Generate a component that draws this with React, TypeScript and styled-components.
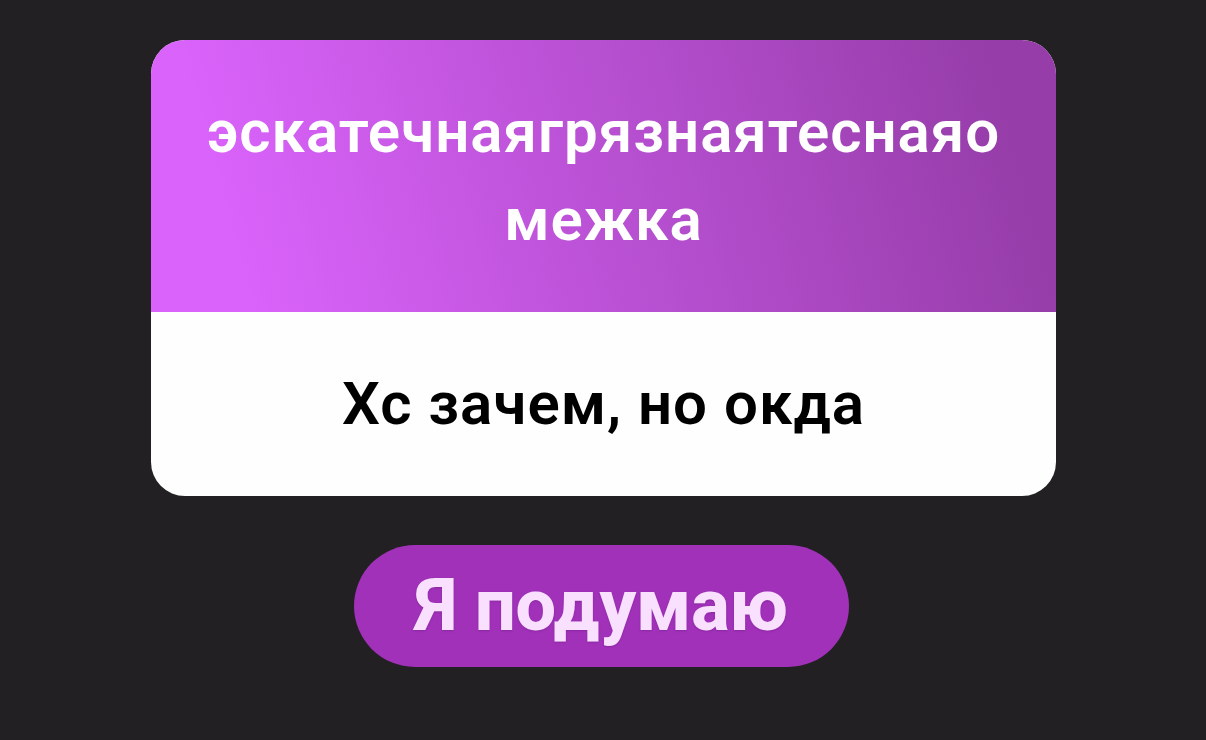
import React from "react";
import styled, { createGlobalStyle } from "styled-components";

const GlobalStyle = createGlobalStyle`
  body {
    margin: 0;
    background: #232023;
    font-family: Roboto, "Liberation Sans", sans-serif;
  }
`;

const Page = styled.main`
  box-sizing: border-box;
  min-height: 100vh;
  padding: 40px 150px 72px 151px;
  display: flex;
  flex-direction: column;
  align-items: center;
`;

const Card = styled.article`
  width: 100%;
  border-radius: 34px;
  overflow: hidden;
  background: #fefefe;
  text-align: center;
`;

const Question = styled.header`
  padding: 48px;
  background: linear-gradient(75deg, #da63fb 10%, #963da9 93%);
`;

const Title = styled.h1`
  margin: 0;
  font-size: 60px;
  line-height: 88px;
  font-weight: 600;
  letter-spacing: 1px;
  color: #fff;
  word-break: break-all;
`;

const Answer = styled.p`
  margin: 0;
  padding: 48px;
  font-size: 60px;
  line-height: 88px;
  font-weight: 600;
  letter-spacing: 1px;
  color: #000;
`;

const ReplyButton = styled.button`
  margin: 49px 4px 0 0;
  border: 0;
  border-radius: 61px;
  padding: 16px 61px;
  background: #a031b8;
  color: #f9e0ff;
  font-family: inherit;
  font-size: 72px;
  line-height: 90px;
  font-weight: 800;
  text-shadow: 0 1px 2px rgba(60, 0, 80, 0.2);
  cursor: pointer;
`;

export default function App() {
  return (
    <>
      <GlobalStyle />
      <Page>
        <Card>
          <Question>
            <Title>эскатечнаягрязнаятеснаяомежка</Title>
          </Question>
          <Answer>Хс зачем, но окда</Answer>
        </Card>
        <ReplyButton type="button">Я подумаю</ReplyButton>
      </Page>
    </>
  );
}
